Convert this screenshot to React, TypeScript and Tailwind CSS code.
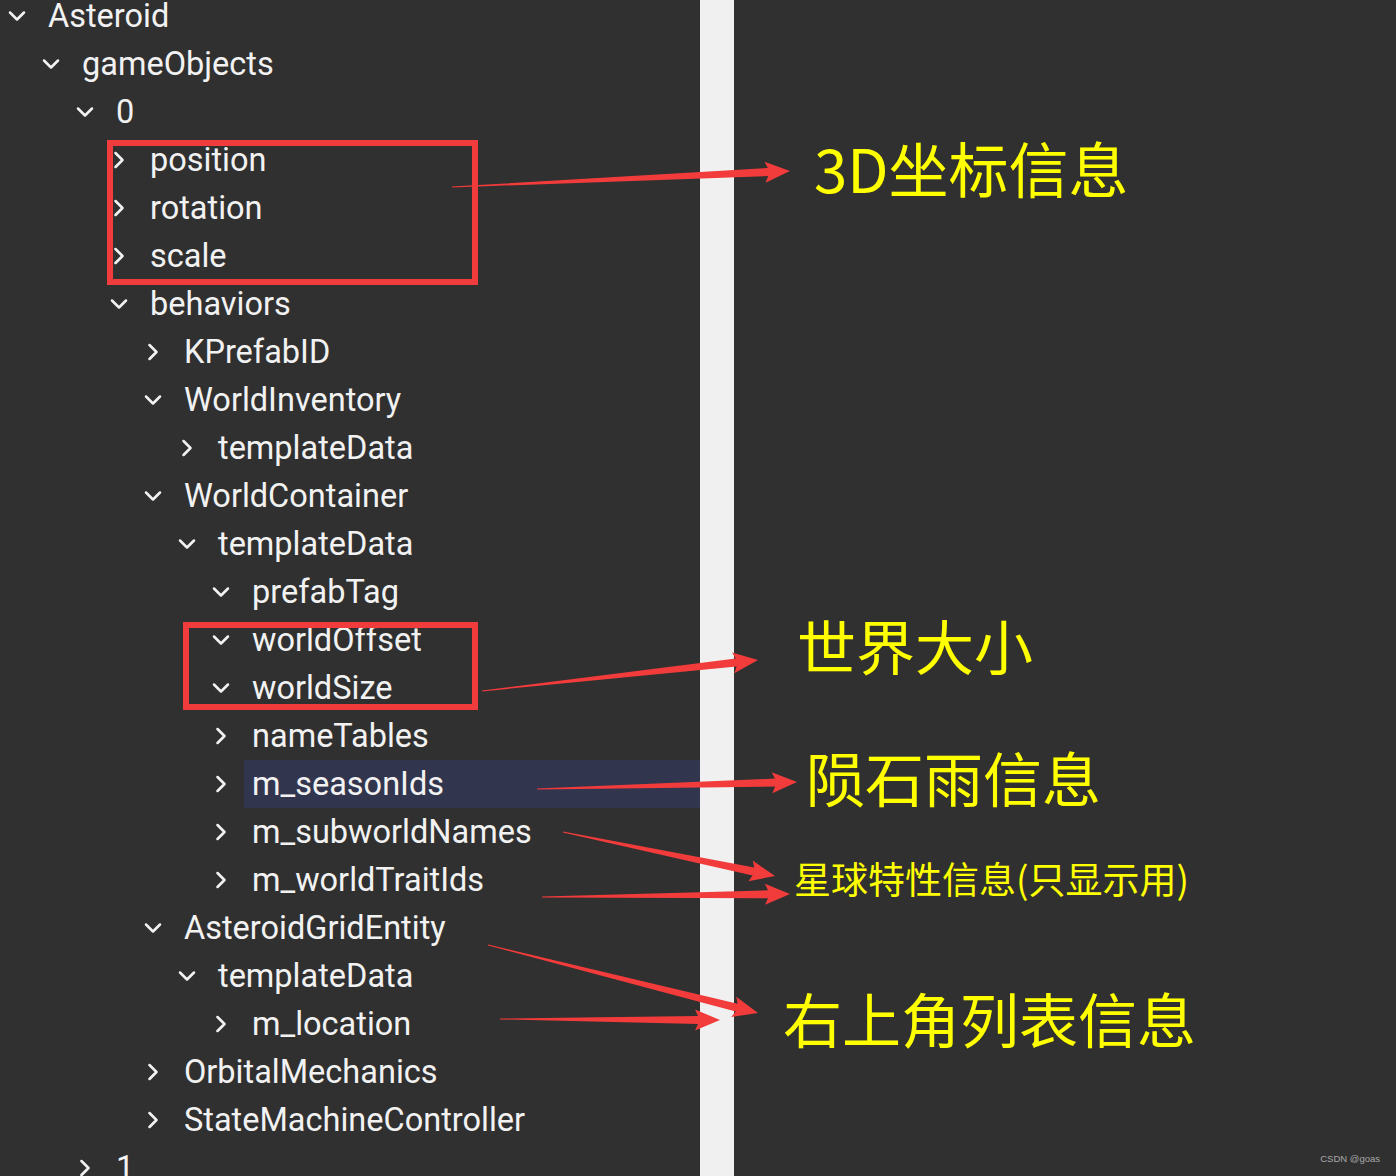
import { ChevronDown, ChevronRight } from "lucide-react";

type TreeNode = {
  depth: number;
  label: string;
  open: boolean;
  selected?: boolean;
};

const rows: TreeNode[] = [
  { depth: 0, label: "Asteroid", open: true },
  { depth: 1, label: "gameObjects", open: true },
  { depth: 2, label: "0", open: true },
  { depth: 3, label: "position", open: false },
  { depth: 3, label: "rotation", open: false },
  { depth: 3, label: "scale", open: false },
  { depth: 3, label: "behaviors", open: true },
  { depth: 4, label: "KPrefabID", open: false },
  { depth: 4, label: "WorldInventory", open: true },
  { depth: 5, label: "templateData", open: false },
  { depth: 4, label: "WorldContainer", open: true },
  { depth: 5, label: "templateData", open: true },
  { depth: 6, label: "prefabTag", open: true },
  { depth: 6, label: "worldOffset", open: true },
  { depth: 6, label: "worldSize", open: true },
  { depth: 6, label: "nameTables", open: false },
  { depth: 6, label: "m_seasonIds", open: false, selected: true },
  { depth: 6, label: "m_subworldNames", open: false },
  { depth: 6, label: "m_worldTraitIds", open: false },
  { depth: 4, label: "AsteroidGridEntity", open: true },
  { depth: 5, label: "templateData", open: true },
  { depth: 6, label: "m_location", open: false },
  { depth: 4, label: "OrbitalMechanics", open: false },
  { depth: 4, label: "StateMachineController", open: false },
  { depth: 2, label: "1", open: false },
];

// [startX, startY, tipX, tipY]
const arrows: [number, number, number, number][] = [
  [452, 187, 790, 171],
  [482, 691, 758, 660],
  [537, 789, 797, 782],
  [563, 832, 775, 876],
  [542, 897, 790, 894],
  [488, 945, 758, 1013],
  [500, 1019, 720, 1020],
];

// tapered shaft + slightly swept arrowhead
function arrowPoints(sx: number, sy: number, tx: number, ty: number) {
  const len = Math.hypot(tx - sx, ty - sy);
  const dx = (tx - sx) / len;
  const dy = (ty - sy) / len;
  const nx = -dy;
  const ny = dx;
  const L = 22;
  const H = 10.5;
  const w = 4;
  const w0 = 0.4;
  const bx = tx - dx * L;
  const by = ty - dy * L;
  const pts = [
    [sx + nx * w0, sy + ny * w0],
    [bx + nx * w, by + ny * w],
    [bx - dx * 3 + nx * H, by - dy * 3 + ny * H],
    [tx, ty],
    [bx - dx * 3 - nx * H, by - dy * 3 - ny * H],
    [bx - nx * w, by - ny * w],
    [sx - nx * w0, sy - ny * w0],
  ];
  return pts.map((p) => `${p[0].toFixed(1)},${p[1].toFixed(1)}`).join(" ");
}

function TreeRow({ node }: { node: TreeNode }) {
  const Icon = node.open ? ChevronDown : ChevronRight;
  return (
    <div
      className="flex h-12 items-center"
      style={{ paddingLeft: 3 + node.depth * 34 }}
    >
      <Icon size={28} strokeWidth={2.2} className="shrink-0 text-[#f2f2f2]" />
      <div
        className={`ml-[9px] flex h-12 flex-1 items-center pl-2 ${
          node.selected ? "bg-[#32354e]" : ""
        }`}
      >
        <span className="whitespace-nowrap text-[32.5px] leading-none text-[#f2f2f2]">
          {node.label}
        </span>
      </div>
    </div>
  );
}

export default function App() {
  return (
    <div
      className="relative flex h-[1176px] w-[1396px] overflow-hidden bg-[#303030]"
      style={{ fontFamily: "Roboto, 'Noto Sans', sans-serif" }}
    >
      <div className="w-[700px] shrink-0 overflow-hidden">
        <div className="-mt-2">
          {rows.map((node, i) => (
            <TreeRow key={i} node={node} />
          ))}
        </div>
      </div>
      <div className="w-[34px] shrink-0 bg-[#f0f0f0]" />
      <div className="flex-1" />

      <svg
        className="pointer-events-none absolute left-0 top-0"
        width={1396}
        height={1176}
        viewBox="0 0 1396 1176"
      >
        <rect x={110} y={143} width={365} height={139} fill="none" stroke="#f03c3c" strokeWidth={6} />
        <rect x={186} y={625} width={289} height={82} fill="none" stroke="#f03c3c" strokeWidth={6} />
        {arrows.map((a, i) => (
          <polygon key={i} points={arrowPoints(a[0], a[1], a[2], a[3])} fill="#f23b3b" />
        ))}
      </svg>

      <div
        className="pointer-events-none absolute left-0 top-0 h-full w-full text-[#ffff00]"
        style={{ fontFamily: "'Noto Sans CJK SC', 'Noto Sans', sans-serif" }}
      >
        <span className="absolute left-[814px] top-[137px] whitespace-nowrap text-[60px] leading-none">
          3D坐标信息
        </span>
        <span className="absolute left-[797px] top-[615px] whitespace-nowrap text-[59px] leading-none">
          世界大小
        </span>
        <span className="absolute left-[806px] top-[747px] whitespace-nowrap text-[59px] leading-none">
          陨石雨信息
        </span>
        <span className="absolute left-[794px] top-[860px] whitespace-nowrap text-[37px] leading-none">
          星球特性信息(只显示用)
        </span>
        <span className="absolute left-[783px] top-[988px] whitespace-nowrap text-[59px] leading-none">
          右上角列表信息
        </span>
      </div>

      <span
        className="absolute right-[16px] bottom-[10px] text-[9.5px] text-[#a8a8a8]"
        style={{ fontFamily: "'Liberation Sans', Arial, sans-serif" }}
      >
        CSDN @goas
      </span>
    </div>
  );
}
